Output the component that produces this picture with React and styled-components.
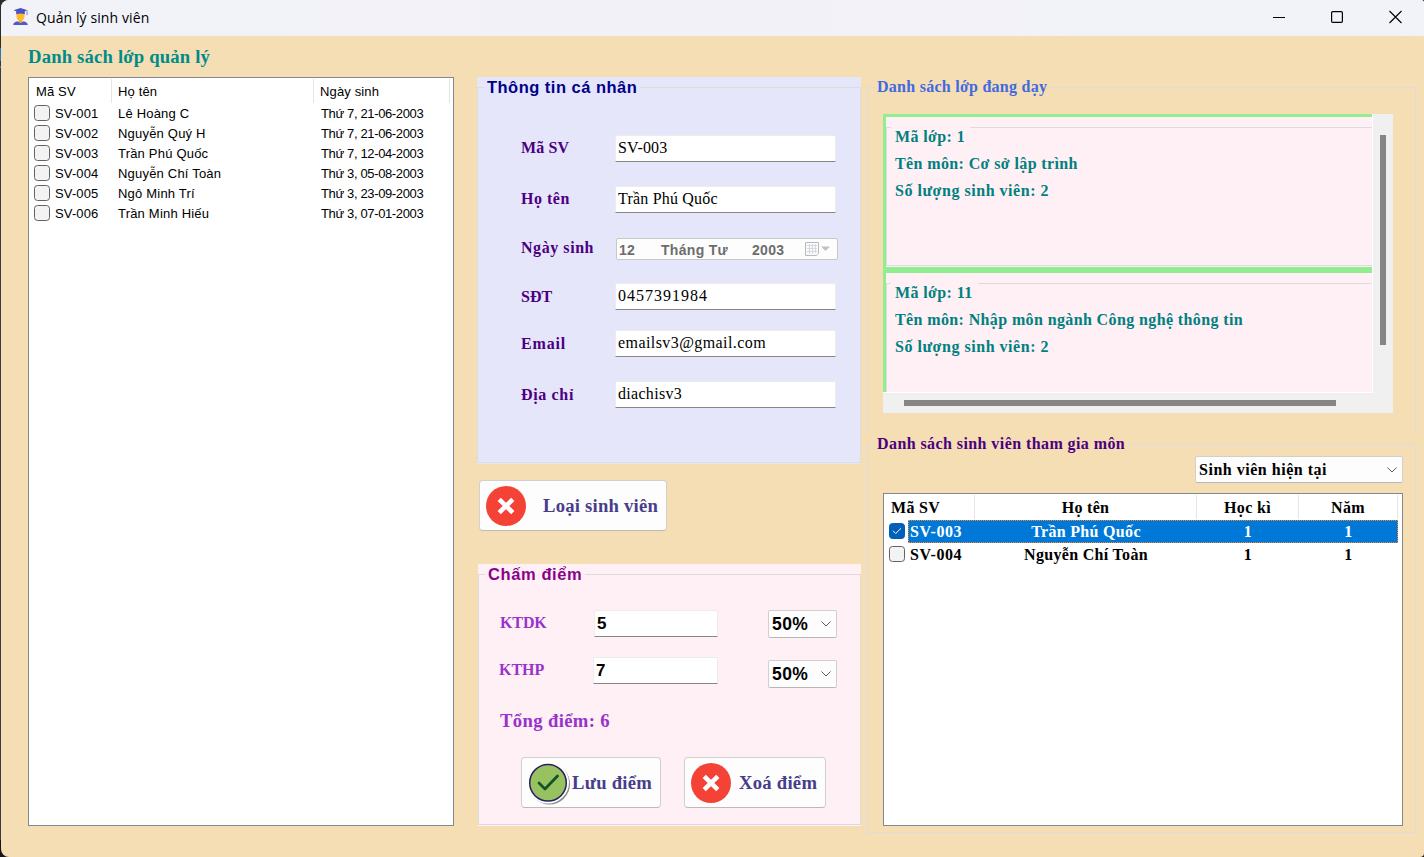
import React from "react";
import styled, { createGlobalStyle } from "styled-components";

const SERIF = '"Liberation Serif", "Times New Roman", serif';
const SANS = '"Liberation Sans", Arial, sans-serif';

const GlobalStyle = createGlobalStyle`
  * { box-sizing: border-box; }
  html, body { margin: 0; padding: 0; background: #1f1f22; overflow: hidden; }
  body { font-family: ${SANS}; color: #000; }
`;

const Desktop = styled.div`
  width: 1424px;
  height: 857px;
  padding-left: 1px;
  background: linear-gradient(#2b2b30 0 48px, #2f74b5 48px 61px, #38383c 61px 66px, #2f74b5 66px 68px, #3c3c42 68px 840px, #151517 840px);
`;

const Window = styled.div`
  display: flex;
  flex-direction: column;
  height: 100%;
  border-radius: 8px 3px 4px 8px;
  overflow: hidden;
  background: #f5deb3;
`;

const TitleBar = styled.header`
  display: flex;
  align-items: center;
  flex: 0 0 36px;
  padding-left: 11px;
  background: linear-gradient(90deg, #f1f3f9, #f3f1f8 45%, #f1f3f9);
`;

const TitleText = styled.h1`
  flex: 1;
  margin: 0 0 1px 7px;
  font: 400 14px/20px "Open Sans", "Noto Sans", sans-serif;
  letter-spacing: 0.1px;
`;

const Caption = styled.div`
  display: flex;
  gap: 46px;
  padding: 0 22px 2px 0;
`;

const Content = styled.main`
  display: grid;
  grid-template-columns: 426px 384px 549px;
  justify-content: start;
  padding: 0 0 0 27px;
`;

const ListColumn = styled.section`
  display: flex;
  flex-direction: column;
  height: 790px;
  padding-top: 10px;
`;

const ListTitle = styled.h2`
  height: 31px;
  margin: 0;
  font: 700 18.67px/22px ${SERIF};
  letter-spacing: 0.18px;
  color: #008b8b;
  white-space: nowrap;
`;

const Table = styled.div`
  flex: 1;
  display: flex;
  flex-direction: column;
  min-height: 0;
  border: 1px solid #828790;
  background: #fff;
  font: ${(p) => (p.$serif ? `700 16px/20px ${SERIF}` : `400 13px/18px ${SANS}`)};
  letter-spacing: ${(p) => (p.$serif ? "0.32px" : "0.14px")};
  white-space: nowrap;
`;

const TableRow = styled.div`
  position: relative;
  display: grid;
  grid-template-columns: ${(p) => p.$columns};
  align-items: center;
  height: ${(p) => p.$height}px;
`;

const HeadCell = styled.div`
  display: flex;
  align-items: center;
  justify-content: ${(p) => (p.$center ? "center" : "flex-start")};
  height: 24px;
  margin-top: ${(p) => (p.$center || p.$serif ? 0 : 1)}px;
  padding: 2px 0 0 ${(p) => p.$left || 0}px;
  border-right: 1px solid #e5e5e5;
`;

const Cell = styled.div`
  display: flex;
  align-items: center;
  justify-content: ${(p) => (p.$center ? "center" : "flex-start")};
  height: 100%;
  padding: ${(p) => p.$drop || 0}px 0 0 ${(p) => p.$left || 0}px;
  background: ${(p) => (p.$selected ? "#0078d7" : "transparent")};
  color: ${(p) => (p.$selected ? "#fff" : "#000")};
  letter-spacing: ${(p) => (p.$track === undefined ? "inherit" : `${p.$track}px`)};
`;

const KeyCell = styled.div`
  display: flex;
  align-items: center;
  gap: 5px;
  height: 100%;
  padding: 0 0 ${(p) => p.$lift || 0}px 5px;
`;

const KeyText = styled.span`
  padding-top: 2px;
`;

const Focus = styled.div`
  position: absolute;
  inset: 0 4px 0 24px;
  border: 1px dotted #ff8728;
`;

const Check = styled.span`
  display: flex;
  flex: none;
  align-items: center;
  justify-content: center;
  width: 16px;
  height: 16px;
  border: 1px solid ${(p) => (p.$on ? "#005fb8" : "#626262")};
  border-radius: 3.5px;
  background: ${(p) => (p.$on ? "#005fb8" : "#f3f3f3")};
`;

const MiddleColumn = styled.section`
  display: flex;
  flex-direction: column;
  align-items: flex-start;
  width: 384px;
  padding-top: 41px;
  margin-left: 23px;
`;

const GroupBox = styled.section`
  width: ${(p) => p.$width}px;
  height: ${(p) => p.$height}px;
  margin: ${(p) => p.$margin || 0};
  padding: 10px 0 ${(p) => p.$foot || 0}px;
  background: ${(p) => p.$tone || "#f5deb3"};
`;

const Frame = styled.div`
  height: 100%;
  border: 1px solid #dcdcdc;
  border-bottom-width: ${(p) => (p.$open ? 0 : 1)}px;
`;

const Legend = styled.h2`
  width: fit-content;
  height: 20px;
  margin: -11px 0 0 6px;
  padding: 0 3px;
  background: ${(p) => p.$tone || "#f5deb3"};
  font: ${(p) => (p.$sans ? `700 16.5px/20px ${SANS}` : `700 16px/20px ${SERIF}`)};
  letter-spacing: ${(p) => p.$track}px;
  color: ${(p) => p.$color};
  white-space: nowrap;
`;

const Field = styled.label`
  display: flex;
  align-items: center;
  height: ${(p) => p.$height || 27}px;
  margin-top: ${(p) => p.$gap}px;
  padding-left: 43px;
`;

const FieldName = styled.span`
  flex: none;
  width: ${(p) => p.$width || 94}px;
  margin-top: ${(p) => p.$raise || 0}px;
  font: 700 16px/20px ${SERIF};
  letter-spacing: ${(p) => p.$track}px;
  color: ${(p) => p.$color || "#4b0082"};
  white-space: nowrap;
`;

const TextInput = styled.input`
  display: block;
  width: ${(p) => p.$width || 221}px;
  height: 27px;
  padding: ${(p) => (p.$bold ? "0 1px 0 2px" : "0 1px 2px 2px")};
  border: 1px solid #ececec;
  border-bottom: 1px solid #868686;
  border-radius: 1px;
  outline: 0;
  background: #fff;
  color: #000;
  font: ${(p) => (p.$bold ? `700 17px ${SANS}` : `400 16px ${SERIF}`)};
  letter-spacing: ${(p) => p.$track || 0}px;
`;

const DateBox = styled.div`
  display: flex;
  align-items: center;
  width: 222px;
  height: 22px;
  margin-left: 1px;
  padding-left: 2px;
  border: 1px solid #c8c8c8;
  border-radius: 2px;
  background: #fdfdfd;
  font: 700 14px/18px ${SANS};
  letter-spacing: 0.3px;
  color: #6d6d6d;

  span { padding-top: 1px; }
  span:nth-child(1) { width: 42px; }
  span:nth-child(2) { width: 91px; }
  span:nth-child(3) { width: 52px; }
`;

const ActionButton = styled.button`
  display: flex;
  align-items: center;
  width: ${(p) => p.$width}px;
  height: 51px;
  margin: ${(p) => p.$margin || 0};
  padding: 0 0 0 6px;
  gap: ${(p) => p.$gap}px;
  border: 1px solid #d0d0d0;
  border-bottom-color: #bababa;
  border-radius: 4px;
  background: #fdfdfd;
  color: #483d8b;
  font: 700 18.67px/22px ${SERIF};
  letter-spacing: ${(p) => p.$track}px;
  white-space: nowrap;

  svg { flex: none; display: block; }
`;

const ScoreRow = styled.div`
  display: flex;
  align-items: flex-start;
  height: 27px;
  margin-top: ${(p) => p.$gap}px;
  padding-left: ${(p) => p.$left}px;
`;

const ScoreInput = styled(TextInput)`
  margin-right: 50px;
`;

const Select = styled.div`
  display: flex;
  align-items: center;
  justify-content: space-between;
  width: ${(p) => p.$width}px;
  height: ${(p) => p.$height}px;
  margin: ${(p) => p.$margin || 0};
  padding: 0 4px 0 3px;
  border: 1px solid #d0d0d0;
  border-bottom-color: #b8b8b8;
  border-radius: 2px;
  background: #fdfdfd;
  font: ${(p) => (p.$sans ? `700 17.5px/20px ${SANS}` : `700 16px/20px ${SERIF}`)};
  letter-spacing: ${(p) => p.$track}px;
  white-space: nowrap;
`;

const Total = styled.p`
  margin: 25px 0 0 21px;
  font: 700 18.67px/24px ${SERIF};
  letter-spacing: 0.36px;
  color: #9932cc;
`;

const ButtonRow = styled.div`
  display: flex;
  gap: 23px;
  margin: 24px 0 0 42px;
`;

const RightColumn = styled.section`
  display: flex;
  flex-direction: column;
  width: 549px;
  padding-top: 41px;
  margin-left: 29px;
`;

const ScrollPanel = styled.div`
  display: grid;
  grid-template: 279px 20px / 490px 20px;
  width: 510px;
  margin: 17px 0 0 15px;
  background: #f0f0f0;
`;

const CardList = styled.div`
  display: flex;
  flex-direction: column;
  gap: 6px;
  padding: 3px 0 0 3px;
  overflow: hidden;
  border-right: 1px solid #fff;
  border-bottom: 1px solid #fff;
  background: #90ee90;
`;

const ClassCard = styled.article`
  flex: 0 0 150px;
  padding: 10px 0 1px;
  background: #fff0f5;
`;

const CardFrame = styled.div`
  height: 139px;
  border: solid #dcdcdc;
  border-width: 1px 0 1px 1px;
`;

const CardLine = styled.p`
  width: fit-content;
  height: 27px;
  margin: 0 0 0 4px;
  padding: 0 5px 0 4px;
  background: #fff0f5;
  font: 700 16px/27px ${SERIF};
  letter-spacing: 0.38px;
  color: #008080;
  white-space: nowrap;

  &:first-child { margin-top: -5px; }
  &:last-child { letter-spacing: 0.53px; }
`;

const VTrack = styled.div`
  padding: 21px 0 0 7px;
`;

const VThumb = styled.div`
  width: 6px;
  height: 210px;
  background: #858585;
`;

const HTrack = styled.div`
  grid-column: 1 / -1;
  padding: 7px 0 0 21px;
`;

const HThumb = styled.div`
  width: 432px;
  height: 6px;
  background: #858585;
`;

const MemberTable = styled(Table)`
  width: 520px;
  height: 333px;
  flex: none;
  margin: 10px 0 0 15px;
`;

const AppIcon = styled.svg`
  flex: none;
  margin-bottom: 3px;
`;

const StudentIcon = () => (
  <AppIcon width="17" height="19" viewBox="0 0 17 19">
    <path d="M1.2 18c0-2 1.300-2.800 4-3.700l3.300 1.400 3.300-1.400c2.700.9 4 1.700 4 3.700z" fill="#4f58cf" />
    <path d="M4.500 5.500h8v4.300c0 1.700-1 3-2.200 3.800v1L8.500 16l-1.800-1.400v-1C5.500 12.800 4.500 11.500 4.500 9.800z" fill="#fdbb2e" />
    <path d="M6.700 13.600c1.200.6 2.400.6 3.600 0v1L8.500 16l-1.800-1.400z" fill="#e9a01f" />
    <path d="M1.500 3.200L8.500 1l7 2.200-2.700 1.100v2.900C10 6.300 7 6.300 4.200 7.200V4.300z" fill="#4a51c4" />
    <path d="M15 3.400v4.800" stroke="#7a80dc" strokeWidth="1" />
  </AppIcon>
);

const CrossIcon = () => (
  <svg width="40" height="40" viewBox="0 0 40 40">
    <circle cx="20" cy="20" r="20" fill="#f44336" />
    <path d="M13.200 13.400l13.600 13.200M26.800 13.400L13.200 26.600" stroke="#fff" strokeWidth="4.600" />
  </svg>
);

const SaveIcon = () => (
  <svg width="43" height="44" viewBox="0 0 43 44">
    <circle cx="21.500" cy="23" r="20.500" fill="#8c8c8c" />
    <circle cx="20" cy="21.500" r="21" fill="#fdfdfd" />
    <circle cx="20" cy="21.800" r="18.300" fill="#97c25f" stroke="#2a1f63" strokeWidth="1.500" />
    <path d="M11 22l6 6 12.500-13" fill="none" stroke="#14532a" strokeWidth="2.800" strokeLinecap="round" strokeLinejoin="round" />
  </svg>
);

const Chevron = () => (
  <svg width="12" height="8" viewBox="0 0 12 8" fill="none" stroke="#5c5c5c" strokeWidth="1">
    <path d="M1.500 1.500L6 6l4.500-4.500" />
  </svg>
);

const CalendarIcon = () => (
  <svg width="28" height="18" viewBox="0 0 28 18">
    <path d="M1.500 2.500h13v11l-2 2h-11z" fill="#fafafa" stroke="#b9b9b9" />
    <path d="M3 5.500h10M3 8.500h10M3 11.500h10M5.500 4v10M8.500 4v10M11.500 4v9" stroke="#d3d9df" />
    <path d="M17 6.500h9l-4.500 4.500z" fill="#c1c1ba" />
  </svg>
);

const CheckMark = () => (
  <svg width="10" height="8" viewBox="0 0 10 8" fill="none" stroke="#fff">
    <path d="M1 3.800l2.700 2.700L9 1.300" />
  </svg>
);

const students = [
  ["SV-001", "Lê Hoàng C", "Thứ 7, 21-06-2003"],
  ["SV-002", "Nguyễn Quý H", "Thứ 7, 21-06-2003"],
  ["SV-003", "Trần Phú Quốc", "Thứ 7, 12-04-2003"],
  ["SV-004", "Nguyễn Chí Toàn", "Thứ 3, 05-08-2003"],
  ["SV-005", "Ngô Minh Trí", "Thứ 3, 23-09-2003"],
  ["SV-006", "Trần Minh Hiếu", "Thứ 3, 07-01-2003"],
];

const fields = [
  { name: "Mã SV", value: "SV-003", gap: 38, raise: -2, nameTrack: 0.1, track: 0.2 },
  { name: "Họ tên", value: "Trần Phú Quốc", gap: 24, raise: -2, nameTrack: 0.5, track: 0.2 },
  { name: "Ngày sinh", date: ["12", "Tháng Tư", "2003"], gap: 25, raise: -2, nameTrack: 0.56 },
  { name: "SĐT", value: "0457391984", gap: 23, raise: 0, nameTrack: 0, track: 1 },
  { name: "Email", value: "emailsv3@gmail.com", gap: 20, raise: 0, nameTrack: 0.85, track: 0.42 },
  { name: "Địa chỉ", value: "diachisv3", gap: 24, raise: 0, nameTrack: 0.65, track: 0.3 },
];

const classes = [
  ["Mã lớp: 1", "Tên môn: Cơ sở lập trình", "Số lượng sinh viên: 2"],
  ["Mã lớp: 11", "Tên môn: Nhập môn ngành Công nghệ thông tin", "Số lượng sinh viên: 2"],
];

const members = [
  { id: "SV-003", name: "Trần Phú Quốc", term: "1", year: "1", selected: true },
  { id: "SV-004", name: "Nguyễn Chí Toàn", term: "1", year: "1", selected: false },
];

const STUDENT_COLS = "83px 202px 136px";
const MEMBER_COLS = "91px 222px 102px 99px";

export default function App() {
  return (
    <Desktop>
      <GlobalStyle />
      <Window>
        <TitleBar>
          <StudentIcon />
          <TitleText>Quản lý sinh viên</TitleText>
          <Caption>
            <svg width="12" height="14" viewBox="0 0 12 14"><path d="M0 7.500h12" stroke="#000" /></svg>
            <svg width="12" height="14" viewBox="0 0 12 14"><rect x="0.600" y="1.600" width="10.800" height="10.800" rx="1.200" fill="none" stroke="#000" strokeWidth="1.200" /></svg>
            <svg width="13" height="14" viewBox="0 0 13 14"><path d="M0.500 1l12 12M12.500 1l-12 12" stroke="#000" strokeWidth="1.100" /></svg>
          </Caption>
        </TitleBar>
        <Content>
          <ListColumn>
            <ListTitle>Danh sách lớp quản lý</ListTitle>
            <Table>
              <TableRow $columns={STUDENT_COLS} $height={25}>
                <HeadCell $left={7}>Mã SV</HeadCell>
                <HeadCell $left={6}>Họ tên</HeadCell>
                <HeadCell $left={6}>Ngày sinh</HeadCell>
              </TableRow>
              {students.map(([id, name, born]) => (
                <TableRow key={id} $columns={STUDENT_COLS} $height={20}>
                  <KeyCell><Check /><KeyText>{id}</KeyText></KeyCell>
                  <Cell $left={6} $drop={2} $track={0.2}>{name}</Cell>
                  <Cell $left={7} $drop={2} $track={-0.36}>{born}</Cell>
                </TableRow>
              ))}
            </Table>
          </ListColumn>

          <MiddleColumn>
            <GroupBox $width={384} $height={387} $foot={1} $tone="#e6e6fa">
              <Frame>
                <Legend $sans $tone="#e6e6fa" $color="#00008b" $track={0.48}>Thông tin cá nhân</Legend>
                {fields.map((f) => (
                  <Field key={f.name} $gap={f.gap} $height={f.date ? 22 : 27}>
                    <FieldName $track={f.nameTrack} $raise={f.raise}>{f.name}</FieldName>
                    {f.date ? (
                      <DateBox>
                        {f.date.map((part) => <span key={part}>{part}</span>)}
                        <CalendarIcon />
                      </DateBox>
                    ) : (
                      <TextInput readOnly value={f.value} $track={f.track} />
                    )}
                  </Field>
                ))}
              </Frame>
            </GroupBox>

            <ActionButton $width={188} $gap={17} $track={0.22} $margin="16px 0 0 2px">
              <CrossIcon />Loại sinh viên
            </ActionButton>

            <GroupBox $width={383} $height={262} $foot={1} $tone="#fff0f5" $margin="33px 0 0 1px">
              <Frame>
                <Legend $sans $tone="#fff0f5" $color="#8b008b" $track={0.6}>Chấm điểm</Legend>
                <ScoreRow $gap={26} $left={21}>
                  <FieldName $color="#9932cc" $track={-0.1} $raise={3}>KTDK</FieldName>
                  <ScoreInput readOnly value="5" $bold $width={124} />
                  <Select $sans $width={69} $height={28} $track={0.4}>50%<Chevron /></Select>
                </ScoreRow>
                <ScoreRow $gap={20} $left={20}>
                  <FieldName $color="#9932cc" $track={0} $raise={3}>KTHP</FieldName>
                  <ScoreInput readOnly value="7" $bold $width={125} />
                  <Select $sans $width={69} $height={28} $track={0.4} $margin="3px 0 0">50%<Chevron /></Select>
                </ScoreRow>
                <Total>Tổng điểm: 6</Total>
                <ButtonRow>
                  <ActionButton $width={140} $gap={1} $track={0.25}><SaveIcon />Lưu điểm</ActionButton>
                  <ActionButton $width={142} $gap={8} $track={0.25}><CrossIcon />Xoá điểm</ActionButton>
                </ButtonRow>
              </Frame>
            </GroupBox>
          </MiddleColumn>

          <RightColumn>
            <GroupBox $width={549} $height={357}>
              <Frame $open>
                <Legend $color="#4169e1" $track={0.26}>Danh sách lớp đang dạy</Legend>
                <ScrollPanel>
                  <CardList>
                    {classes.map((lines) => (
                      <ClassCard key={lines[0]}>
                        <CardFrame>
                          {lines.map((line) => <CardLine key={line}>{line}</CardLine>)}
                        </CardFrame>
                      </ClassCard>
                    ))}
                  </CardList>
                  <VTrack><VThumb /></VTrack>
                  <HTrack><HThumb /></HTrack>
                </ScrollPanel>
              </Frame>
            </GroupBox>
            <GroupBox $width={549} $height={399}>
              <Frame>
                <Legend $color="#4b0082" $track={0.42}>Danh sách sinh viên tham gia môn</Legend>
                <Select $width={208} $height={27} $track={0.52} $margin="2px 0 0 327px">Sinh viên hiện tại<Chevron /></Select>
                <MemberTable $serif>
                  <TableRow $columns={MEMBER_COLS} $height={26}>
                    <HeadCell $serif $left={7}>Mã SV</HeadCell>
                    <HeadCell $center>Họ tên</HeadCell>
                    <HeadCell $center>Học kì</HeadCell>
                    <HeadCell $center>Năm</HeadCell>
                  </TableRow>
                  {members.map((m) => (
                    <TableRow key={m.id} $columns="24px 67px 222px 102px 99px" $height={23}>
                      <KeyCell $lift={1}><Check $on={m.selected}>{m.selected && <CheckMark />}</Check></KeyCell>
                      <Cell $left={2} $track={0.6} $selected={m.selected}>{m.id}</Cell>
                      <Cell $center $selected={m.selected}>{m.name}</Cell>
                      <Cell $center $selected={m.selected}>{m.term}</Cell>
                      <Cell $center $selected={m.selected}>{m.year}</Cell>
                      {m.selected && <Focus />}
                    </TableRow>
                  ))}
                </MemberTable>
              </Frame>
            </GroupBox>
          </RightColumn>
        </Content>
      </Window>
    </Desktop>
  );
}
